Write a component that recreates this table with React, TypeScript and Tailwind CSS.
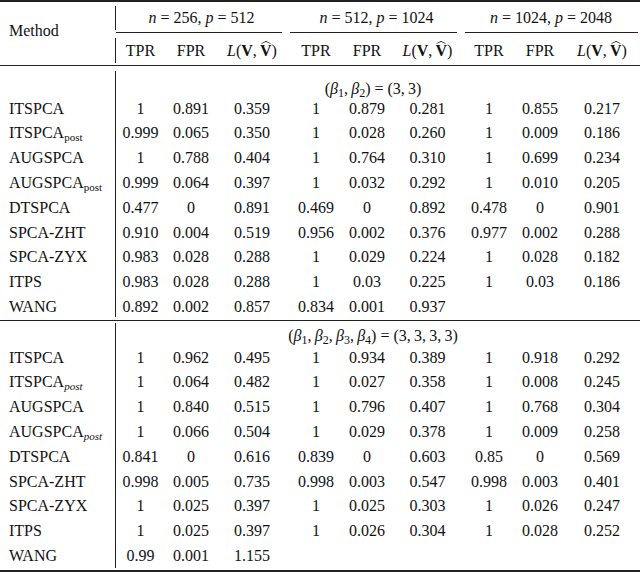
import React from 'react';

type Row = { name: string; post?: boolean; vals: string[] };

const section1: Row[] = [
    { name: 'ITSPCA', vals: ['1', '0.891', '0.359', '1', '0.879', '0.281', '1', '0.855', '0.217'] },
    { name: 'ITSPCA', post: true, vals: ['0.999', '0.065', '0.350', '1', '0.028', '0.260', '1', '0.009', '0.186'] },
    { name: 'AUGSPCA', vals: ['1', '0.788', '0.404', '1', '0.764', '0.310', '1', '0.699', '0.234'] },
    { name: 'AUGSPCA', post: true, vals: ['0.999', '0.064', '0.397', '1', '0.032', '0.292', '1', '0.010', '0.205'] },
    { name: 'DTSPCA', vals: ['0.477', '0', '0.891', '0.469', '0', '0.892', '0.478', '0', '0.901'] },
    { name: 'SPCA-ZHT', vals: ['0.910', '0.004', '0.519', '0.956', '0.002', '0.376', '0.977', '0.002', '0.288'] },
    { name: 'SPCA-ZYX', vals: ['0.983', '0.028', '0.288', '1', '0.029', '0.224', '1', '0.028', '0.182'] },
    { name: 'ITPS', vals: ['0.983', '0.028', '0.288', '1', '0.03', '0.225', '1', '0.03', '0.186'] },
    { name: 'WANG', vals: ['0.892', '0.002', '0.857', '0.834', '0.001', '0.937', '', '', ''] },
];

const section2: Row[] = [
    { name: 'ITSPCA', vals: ['1', '0.962', '0.495', '1', '0.934', '0.389', '1', '0.918', '0.292'] },
    { name: 'ITSPCA', post: true, vals: ['1', '0.064', '0.482', '1', '0.027', '0.358', '1', '0.008', '0.245'] },
    { name: 'AUGSPCA', vals: ['1', '0.840', '0.515', '1', '0.796', '0.407', '1', '0.768', '0.304'] },
    { name: 'AUGSPCA', post: true, vals: ['1', '0.066', '0.504', '1', '0.029', '0.378', '1', '0.009', '0.258'] },
    { name: 'DTSPCA', vals: ['0.841', '0', '0.616', '0.839', '0', '0.603', '0.85', '0', '0.569'] },
    { name: 'SPCA-ZHT', vals: ['0.998', '0.005', '0.735', '0.998', '0.003', '0.547', '0.998', '0.003', '0.401'] },
    { name: 'SPCA-ZYX', vals: ['1', '0.025', '0.397', '1', '0.025', '0.303', '1', '0.026', '0.247'] },
    { name: 'ITPS', vals: ['1', '0.025', '0.397', '1', '0.026', '0.304', '1', '0.028', '0.252'] },
    { name: 'WANG', vals: ['0.99', '0.001', '1.155', '', '', '', '', '', ''] },
];

const cols = 'grid grid-cols-[49px_52px_70px_58px_44px_77px_46px_56px_68px]';

// bold V with a hat accent (CSS chevron) on top
const VHat = () => (
    <span className="relative inline-block font-bold leading-[16px]">
        V
        <span className="absolute left-1/2 top-[-3px] -translate-x-1/2 scale-y-[0.5] block">
            <span className="block w-[7px] h-[7px] rotate-45 border-l-[1.5px] border-t-[1.5px] border-[#111]" />
        </span>
    </span>
);

const LossHead = () => (
    <span className="whitespace-nowrap">
        <i>L</i>(<b>V</b>,&thinsp;<VHat />)
    </span>
);

const Method = ({ row, italicPost }: { row: Row; italicPost: boolean }) => (
    <div className="h-[24.8px] leading-[24.8px] pl-[9px] whitespace-nowrap">
        {row.name}
        {row.post && <sub className={italicPost ? 'italic text-[11px]' : 'text-[11px]'}>post</sub>}
    </div>
);

const Section = ({ rows, heading, italicPost, headH, headClass, boxH }: {
    rows: Row[];
    heading: React.ReactNode;
    italicPost: boolean;
    headH: string;
    headClass: string;
    boxH: string;
}) => (
    <div className={`flex ${boxH}`}>
        <div className="w-[115px] shrink-0">
            <div className={headH} />
            {rows.map((r, i) => <Method key={i} row={r} italicPost={italicPost} />)}
        </div>
        <div className="flex-1 border-l border-[#222]">
            <div className={`${headH} ${headClass} text-center pr-[10px] whitespace-nowrap`}>{heading}</div>
            {rows.map((r, i) => (
                <div key={i} className={`${cols} h-[24.8px] leading-[24.8px] text-center`}>
                    {r.vals.map((v, j) => <div key={j}>{v}</div>)}
                </div>
            ))}
        </div>
    </div>
);

const Rule = ({ className }: { className: string }) => <div className={`w-full bg-[#222] ${className}`} />;

export default function App() {
    return (
        <div className="w-[640px] h-[573px] bg-white text-[#111] text-[16px]" style={{ fontFamily: '"Liberation Serif", "Times New Roman", serif' }}>
            <Rule className="h-[2px]" />

            {/* header */}
            <div className="flex h-[63px]">
                <div className="w-[115px] shrink-0 pl-[9px] pt-[17px] leading-[24px]">Method</div>
                <div className="flex-1 flex flex-col">
                    <div className="mt-[4px] h-[24px] leading-[24px] border-l border-[#222] flex">
                        <div className="w-[171px] text-center"><i>n</i> = 256, <i>p</i> = 512</div>
                        <div className="w-[179px] text-center"><i>n</i> = 512, <i>p</i> = 1024</div>
                        <div className="w-[170px] text-center"><i>n</i> = 1024, <i>p</i> = 2048</div>
                    </div>
                    <div className="h-[8px] flex items-start pt-[2px] -ml-[115px]">
                        <div className="w-[116px]" />
                        <div className="w-[166px] h-[1px] bg-[#222]" />
                        <div className="w-[8px]" />
                        <div className="w-[167px] h-[1px] bg-[#222]" />
                        <div className="w-[8px]" />
                        <div className="w-[173px] h-[1px] bg-[#222]" />
                    </div>
                    <div className={`${cols} h-[25px] leading-[25px] text-center border-l border-[#222]`}>
                        <div>TPR</div><div>FPR</div><div><LossHead /></div>
                        <div>TPR</div><div>FPR</div><div><LossHead /></div>
                        <div>TPR</div><div>FPR</div><div><LossHead /></div>
                    </div>
                </div>
            </div>

            <Rule className="h-[1px]" />
            <div className="h-[5px]" />

            <Section
                rows={section1}
                italicPost={false}
                boxH="h-[246px]"
                headH="h-[25.6px]"
                headClass="pt-[10px] leading-[15px]"
                heading={<span>(<i>β</i><sub>1</sub>,&thinsp;<i>β</i><sub>2</sub>) = (3,&thinsp;3)</span>}
            />

            <div className="h-[3px]" />
            <Rule className="h-[1px]" />
            <div className="h-[2px]" />

            <Section
                rows={section2}
                italicPost={true}
                boxH="h-[245px]"
                headH="h-[22.6px]"
                headClass="pt-[2px] leading-[22.6px]"
                heading={<span>(<i>β</i><sub>1</sub>,&thinsp;<i>β</i><sub>2</sub>,&thinsp;<i>β</i><sub>3</sub>,&thinsp;<i>β</i><sub>4</sub>) = (3,&thinsp;3,&thinsp;3,&thinsp;3)</span>}
            />

            <div className="h-[2px]" />
            <Rule className="h-[2px]" />
        </div>
    );
}
